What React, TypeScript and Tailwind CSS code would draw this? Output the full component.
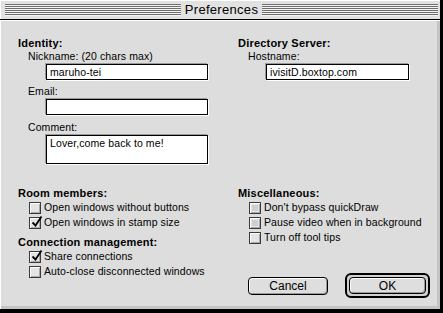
import React from 'react';

const font = "font-['Liberation_Sans',Arial,sans-serif]";

const Stripes: React.FC = () => (
  <div className="flex-1 h-[12px] bg-[repeating-linear-gradient(to_bottom,#6e6e6e_0px,#6e6e6e_1px,#f4f4f4_1px,#f4f4f4_2px)]" />
);

const Header: React.FC<{ children: React.ReactNode }> = ({ children }) => (
  <div className="h-[13px] leading-[13px] text-[11px] font-bold tracking-[0.2px] text-black">{children}</div>
);

const Label: React.FC<{ children: React.ReactNode }> = ({ children }) => (
  <div className="h-[13px] leading-[13px] text-[10.5px] tracking-[0.1px] text-black pl-[10px]">{children}</div>
);

const Field: React.FC<{ value?: string; width: string; tall?: boolean }> = ({ value, width, tall }) => (
  <div
    className={`${width} ${tall ? 'h-[29px]' : 'h-[16px]'} ml-[28px] border border-black bg-white px-[3px] pt-[1px] text-[10.5px] tracking-[0.1px] leading-[12px] text-black shadow-[1px_1px_0_#ffffff,-1px_-1px_0_#9a9a9a]`}
  >
    {value}
  </div>
);

const Checkbox: React.FC<{ label: string; checked?: boolean; dim?: boolean }> = ({ label, checked, dim }) => (
  <div className="flex items-center h-[15px] pl-[11px] gap-[3px]">
    <div className="relative w-[12px] h-[12px] border border-[#3a3a3a] bg-[#e4e4e4] shadow-[inset_1px_1px_0_#ffffff,inset_-1px_-1px_0_#a8a8a8]">
      {dim && <div className="absolute inset-[2px] bg-[#cfcfcf]" />}
      {checked && (
        <svg className="absolute left-[1px] top-[-3px]" width="12" height="13" viewBox="0 0 12 13">
          <path d="M1.5 7.5 L4.5 10.5 L10.5 1.5" fill="none" stroke="#000" strokeWidth="1.8" />
        </svg>
      )}
    </div>
    <span className="text-[10.5px] leading-[13px] tracking-[0.1px] text-black">{label}</span>
  </div>
);

export default function App() {
  return (
    <div className={`${font} w-[443px] h-[313px] bg-[#dddddd] flex flex-col border-r-[3px] border-b-[4px] border-black`}>
      {/* title bar */}
      <div className="h-[20px] flex items-center pl-[5px] pr-[2px] bg-[#e2e2e2] shadow-[inset_1px_1px_0_#ffffff] border-b border-black">
        <Stripes />
        <div className="px-[4px] text-[13px] leading-[16px] tracking-[0.3px] text-black">Preferences</div>
        <Stripes />
      </div>

      <div className="flex-1 flex flex-col pl-[17px] pt-[16px] border-l border-t border-white shadow-[inset_-3px_-3px_0_#c4c4c4]">
        <div className="grid grid-cols-[220px_1fr]">
          {/* Identity */}
          <div className="flex flex-col">
            <Header>Identity:</Header>
            <Label>Nickname: (20 chars max)</Label>
            <div className="mt-[1px]"><Field value="maruho-tei" width="w-[162px]" /></div>
            <div className="mt-[5px]"><Label>Email:</Label></div>
            <div className="mt-[1px]"><Field width="w-[162px]" /></div>
            <div className="mt-[6px]"><Label>Comment:</Label></div>
            <div className="mt-[1px]"><Field value="Lover,come back to me!" width="w-[162px]" tall /></div>
          </div>

          {/* Directory server */}
          <div className="flex flex-col">
            <Header>Directory Server:</Header>
            <Label>Hostname:</Label>
            <div className="mt-[1px]"><Field value="ivisitD.boxtop.com" width="w-[143px]" /></div>
          </div>
        </div>

        <div className="grid grid-cols-[220px_1fr] mt-[23px]">
          <div className="flex flex-col">
            <Header>Room members:</Header>
            <div>
              <Checkbox label="Open windows without buttons" />
              <Checkbox label="Open windows in stamp size" checked />
            </div>
            <div className="mt-[6px]"><Header>Connection management:</Header></div>
            <div>
              <Checkbox label="Share connections" checked />
              <Checkbox label="Auto-close disconnected windows" />
            </div>
          </div>

          <div className="flex flex-col">
            <Header>Miscellaneous:</Header>
            <div>
              <Checkbox label="Don't bypass quickDraw" dim />
              <Checkbox label="Pause video when in background" dim />
              <Checkbox label="Turn off tool tips" />
            </div>
            <div className="flex items-center mt-[28px] pl-[10px] gap-[17px]">
              <button className="w-[80px] h-[18px] rounded-[4px] border border-black bg-[#dedede] shadow-[inset_1px_1px_0_#ffffff,inset_-1px_-1px_0_#9a9a9a] text-[12px] leading-[14px] text-black">
                Cancel
              </button>
              <div className="p-[2px] rounded-[6px] border-[2px] border-black bg-[#d0d0d0]">
                <button className="block w-[77px] h-[17px] rounded-[4px] border border-black bg-[#dedede] shadow-[inset_1px_1px_0_#ffffff,inset_-1px_-1px_0_#9a9a9a] text-[12px] leading-[14px] text-black">
                  OK
                </button>
              </div>
            </div>
          </div>
        </div>
      </div>
    </div>
  );
}
